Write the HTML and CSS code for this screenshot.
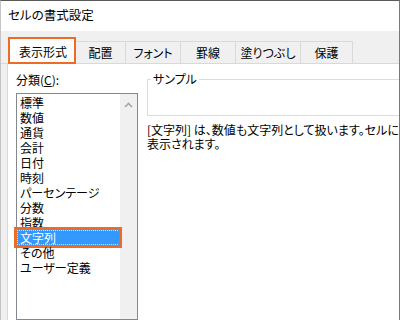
FILE: index.html
```html
<!DOCTYPE html>
<html lang="ja">
<head>
<meta charset="utf-8">
<title>セルの書式設定</title>
<link rel="stylesheet" href="styles.css">
</head>
<body>
<div class="window">
  <div class="titlebar">セルの書式設定</div>
  <div class="tabstrip">
    <div class="tab selected">表示形式</div>
    <div class="tab w50">配置</div>
    <div class="tab w55">フォント</div>
    <div class="tab w55">罫線</div>
    <div class="tab w65">塗りつぶし</div>
    <div class="tab w52">保護</div>
  </div>
  <div class="pane">
    <div class="left">
      <div class="label">分類(<span class="ul">C</span>):</div>
      <div class="listbox">
        <ul class="items">
          <li>標準</li>
          <li>数値</li>
          <li>通貨</li>
          <li>会計</li>
          <li>日付</li>
          <li>時刻</li>
          <li>パーセンテージ</li>
          <li>分数</li>
          <li>指数</li>
          <li class="sel">文字列</li>
          <li>その他</li>
          <li>ユーザー定義</li>
        </ul>
        <div class="scrollbar">
          <svg class="chev" width="9" height="6" viewBox="0 0 9 6"><path d="M1 5 L4.5 1.5 L8 5" fill="none" stroke="#a6a6a6" stroke-width="1.6"/></svg>
        </div>
      </div>
    </div>
    <div class="right">
      <div class="sample"><span class="legend">サンプル</span></div>
      <div class="desc">
        <div class="line">[文字列] は、数値も文字列として扱います。セルには、入力したとおりに</div>
        <div class="line">表示されます。</div>
      </div>
    </div>
  </div>
</div>
</body>
</html>
```
FILE: styles.css
```css
* { box-sizing: border-box; }
html, body { margin: 0; padding: 0; }
body {
  width: 400px;
  height: 320px;
  overflow: hidden;
  font-family: "Noto Sans CJK JP", "Noto Sans", sans-serif;
  font-size: 12px;
  font-feature-settings: "palt";
  color: #000;
}
.window {
  width: 400px;
  height: 320px;
  background: #f0f0f0;
  border-top: 1px solid #5a5a5a;
  border-right: 1px solid #7a7a7a;
  border-left: 1px solid #c4c4c4;
  overflow: hidden;
  display: flex;
  flex-direction: column;
}
.titlebar {
  height: 30px;
  background: #fff;
  padding-left: 7px;
  line-height: 28px;
  font-size: 12.5px;
  flex: none;
}
.tabstrip {
  height: 33px;
  flex: none;
  border-bottom: 1px solid #d9d9d9;
  display: flex;
  align-items: flex-end;
  padding-left: 7px;
  position: relative;
  z-index: 1;
}
.tab {
  height: 22px;
  border-top: 1px solid #d9d9d9;
  border-right: 1px solid #d9d9d9;
  text-align: center;
  line-height: 21px;
  white-space: nowrap;
}
.w50 { width: 50px; }
.w55 { width: 55px; }
.w65 { width: 65px; }
.w52 { width: 52px; }
.tab.selected {
  width: 68px;
  height: 27px;
  margin-bottom: -1px;
  background: #fff;
  border: 2px solid #ee6b25;
  line-height: 24px;
  padding-top: 1px;
  padding-left: 2px;
}
.pane {
  flex: 1;
  margin-left: 6px;
  background: #fff;
  border-left: 1px solid #d9d9d9;
  display: flex;
  padding: 8px 0 0 8px;
  min-height: 0;
}
.left { flex: none; width: 122px; }
.label {
  line-height: 15px;
  height: 15px;
  margin-bottom: 6px;
}
.ul { text-decoration: underline; }
.listbox {
  width: 122px;
  height: 227px;
  border: 1px solid #828790;
  display: flex;
}
.items {
  list-style: none;
  margin: 0;
  padding: 1px 0 0 0;
  flex: 1;
}
.items li {
  line-height: 15px;
  height: 15px;
  padding-left: 3px;
  white-space: nowrap;
  position: relative;
}
.items li.sel {
  background: #3399ff;
  color: #fff;
  outline: 1px dotted #cfe6ff;
  outline-offset: -1px;
}
.items li.sel::after {
  content: "";
  position: absolute;
  left: -3px;
  right: -2px;
  top: -3px;
  bottom: -3px;
  border: 3px solid #ee6b25;
}
.scrollbar {
  flex: none;
  width: 17px;
  background: #f0f0f0;
  display: flex;
  justify-content: center;
  align-items: flex-start;
  padding-top: 8px;
}
.chev { display: block; }
.right {
  flex: 1;
  min-width: 0;
  margin-left: 9px;
  padding-top: 7px;
}
.sample {
  position: relative;
  height: 37px;
  width: calc(100% + 20px);
  border: 1px solid #dcdcdc;
}
.legend {
  position: absolute;
  left: 3px;
  top: -8px;
  background: #fff;
  padding: 0 2px;
  line-height: 14px;
}
.desc {
  margin-top: 7px;
  white-space: nowrap;
}
.line { line-height: 14px; height: 14px; }
```
